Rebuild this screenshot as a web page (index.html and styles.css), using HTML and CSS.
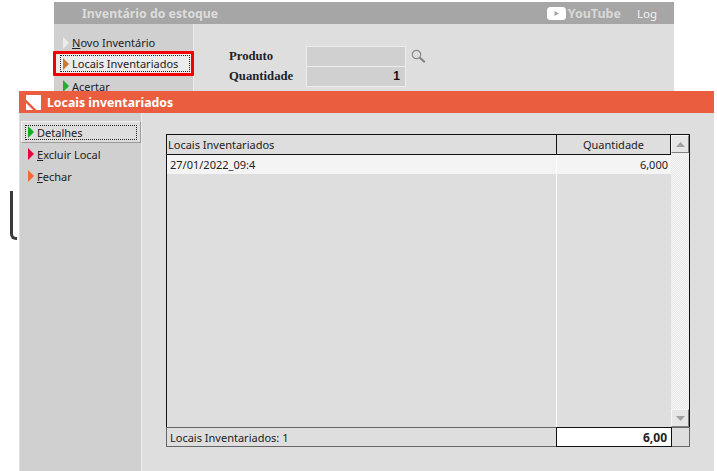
FILE: index.html
```html
<!DOCTYPE html>
<html lang="pt">
<head>
<meta charset="utf-8">
<title>Locais inventariados</title>
<link rel="stylesheet" href="styles.css">
</head>
<body>
<div class="curve"></div>
<section class="back">
  <header class="back-title">
    <span class="back-name">Inventário do estoque</span>
    <span class="yt">
      <svg class="yt-logo" width="19" height="13" viewBox="0 0 19 13"><rect width="19" height="13" rx="3.5" fill="#fff"/><path d="M7.500 4v5l4.500-2.500z" fill="#a6a6a6"/></svg>
      <span class="yt-word">YouTube</span>
    </span>
    <span class="log">Log</span>
  </header>
  <div class="back-body">
    <nav class="back-nav">
      <div class="item item-first"><i class="tri tri-white"></i><span><u>N</u>ovo Inventário</span></div>
      <div class="item item-active"><div class="focus"><i class="tri tri-orange"></i><span>Locais Inventariados</span></div></div>
      <div class="item item-last"><i class="tri tri-green"></i><span>Acertar</span></div>
    </nav>
    <div class="form">
      <div class="form-row">
        <label class="form-label">Produto</label>
        <div class="field"></div>
        <svg class="lens" width="15" height="15" viewBox="0 0 15 15"><circle cx="5.500" cy="5.500" r="4.200" fill="none" stroke="#8a8a8a" stroke-width="1.200"/><path d="M8.800 8.800l5 4.500" stroke="#808080" stroke-width="2"/></svg>
      </div>
      <div class="form-row">
        <label class="form-label">Quantidade</label>
        <div class="field field-num">1</div>
      </div>
    </div>
  </div>
</section>
<section class="win">
  <header class="win-title">
    <svg class="win-logo" width="15" height="15" viewBox="0 0 15 15"><path d="M0 0h15v15h-4.500L0 4.500z" fill="#fff"/><path d="M0 8l7 7H0z" fill="#fff"/></svg>
    <span>Locais inventariados</span>
  </header>
  <div class="win-body">
    <nav class="win-nav">
      <div class="act act-current"><div class="act-focus"><i class="tri tri-green2"></i><span>Detalhes</span></div></div>
      <div class="act"><i class="tri tri-red"></i><span><u>E</u>xcluir Local</span></div>
      <div class="act"><i class="tri tri-orange2"></i><span><u>F</u>echar</span></div>
    </nav>
    <main class="content">
      <div class="grid">
        <div class="grid-main">
          <div class="cols">
            <div class="head-row">
              <div class="head head-a">Locais Inventariados</div>
              <div class="head head-b">Quantidade</div>
            </div>
            <div class="rows">
              <div class="row">
                <div class="cell cell-a">27/01/2022_09:4</div>
                <div class="cell cell-b">6,000</div>
              </div>
              <div class="rows-rest"><div class="rest-a"></div><div class="rest-b"></div></div>
            </div>
          </div>
          <div class="scroll">
            <div class="sbtn"><svg width="9" height="5" viewBox="0 0 9 5"><path d="M4.500 0L9 5H0z" fill="#a0a0a0"/></svg></div>
            <div class="strack"></div>
            <div class="sbtn"><svg width="9" height="5" viewBox="0 0 9 5"><path d="M0 0h9L4.500 5z" fill="#a0a0a0"/></svg></div>
          </div>
        </div>
        <div class="foot">
          <div class="foot-a">Locais Inventariados: 1</div>
          <div class="foot-b">6,00</div>
          <div class="foot-c"></div>
        </div>
      </div>
    </main>
  </div>
</section>
</body>
</html>
```
FILE: styles.css
```css
html, body { margin: 0; padding: 0; }
body {
  width: 717px;
  height: 471px;
  overflow: hidden;
  position: relative;
  background: #fff;
  font-family: "Noto Sans", "DejaVu Sans", sans-serif;
  font-size: 11px;
  color: #222;
  white-space: nowrap;
}
.tri {
  display: block;
  width: 0;
  height: 0;
  border-style: solid;
  border-width: 6.500px 0 6.500px 6px;
  border-color: transparent;
  flex: none;
}
.tri-white { border-left-color: #ececec; }
.tri-orange { border-left-color: #d07a30; }
.tri-green { border-left-color: #1fae2e; }
.tri-green2 { border-left-color: #0fb01a; }
.tri-red { border-left-color: #e5003f; }
.tri-orange2 { border-left-color: #f4693a; }

.curve {
  position: absolute;
  left: 10px;
  top: 191px;
  width: 7px;
  height: 49px;
  box-sizing: border-box;
  border-left: 3px solid #3a3a3a;
  border-bottom: 3px solid #3a3a3a;
  border-bottom-left-radius: 6px;
}

.back {
  position: absolute;
  left: 54px;
  top: 2px;
  width: 620px;
  height: 110px;
  background: #dedede;
}
.back-title {
  height: 22px;
  background: #a6a6a6;
  display: flex;
  align-items: center;
  padding: 0 17px 0 28px;
  color: #dcdcdc;
}
.back-name { font-weight: 700; font-size: 12.300px; flex: 1; }
.yt { display: flex; align-items: center; gap: 2px; margin-right: 16px; }
.yt-logo { display: block; }
.yt-word { font-weight: 700; font-size: 12.500px; color: #d8d8d8; }
.log { color: #f2f2f2; font-size: 11.500px; }
.back-body { display: flex; height: 88px; }
.back-nav {
  width: 139px;
  background: #d0d0d0;
  border-right: 1px solid #ececec;
  padding-top: 9px;
}
.item {
  height: 22px;
  display: flex;
  align-items: center;
  gap: 3px;
  padding-left: 9px;
}
.item-first { height: 18px; padding-top: 1px; box-sizing: border-box; }
.item-last { height: 20px; }
.item-active {
  height: 25px;
  box-sizing: border-box;
  margin-left: -1px;
  width: 141px;
  border: 3px solid #f00000;
  border-radius: 1px;
  background: #ececec;
  padding: 0 0 0 4px;
}
.focus {
  flex: 1;
  height: 15px;
  margin-right: 1px;
  border: 1px dotted #222;
  display: flex;
  align-items: center;
  gap: 3px;
  padding-left: 2px;
}
.form { padding: 22px 0 0 35px; }
.form-row { display: flex; align-items: center; height: 20px; }
.form-label {
  width: 77px;
  padding-top: 1px;
  font-family: "Liberation Serif", serif;
  font-weight: 700;
  font-size: 12.700px;
  color: #1f1f2a;
}
.field {
  width: 98px;
  height: 19px;
  background: #d0d0d0;
  border: 1px solid #ececec;
  margin-bottom: -1px;
}
.field-num {
  text-align: right;
  padding-right: 5px;
  width: 93px;
  line-height: 18px;
  font-family: "Liberation Sans", sans-serif;
  font-weight: 700;
  font-size: 12px;
  color: #111;
}
.lens { margin-left: 5px; display: block; }

.win {
  position: absolute;
  left: 19px;
  top: 91px;
  width: 695px;
  height: 380px;
  background: #dedede;
  display: flex;
  flex-direction: column;
}
.win-title {
  height: 22px;
  background: #ea5e3f;
  display: flex;
  align-items: center;
  gap: 6px;
  padding-left: 7px;
  color: #fff;
  font-weight: 700;
  font-size: 12.300px;
}
.win-logo { display: block; }
.win-body { flex: 1; display: flex; }
.win-nav {
  width: 121px;
  margin-left: 1px;
  background: #d0d0d0;
  border-right: 1px solid #ececec;
  padding-top: 8px;
}
.act {
  height: 22px;
  display: flex;
  align-items: center;
  gap: 3px;
  padding-left: 8px;
}
.act-current {
  height: 22px;
  box-sizing: border-box;
  margin-left: 1px;
  padding: 0 3px;
  width: 120px;
  background: #dedede;
  border: 1px solid #f2f2f2;
  border-right-color: #9a9a9a;
  border-bottom-color: #9a9a9a;
}
.act-focus {
  flex: 1;
  height: 13px;
  border: 1px dotted #222;
  display: flex;
  align-items: center;
  gap: 3px;
  padding-left: 2px;
}
.content { flex: 1; padding: 21px 0 0 24px; }
.grid { width: 524px; }
.grid-main {
  height: 293px;
  display: flex;
  border: 1px solid #111;
  border-bottom: none;
  box-sizing: border-box;
}
.cols { flex: 1; display: flex; flex-direction: column; }
.head-row { display: flex; height: 20px; box-sizing: border-box; border-bottom: 1px solid #111; border-right: 1px solid #111; }
.head { line-height: 19px; }
.head-a { width: 390px; border-right: 1px solid #111; padding-left: 1px; box-sizing: border-box; }
.head-b { flex: 1; text-align: center; }
.rows { flex: 1; display: flex; flex-direction: column; }
.row { display: flex; height: 19px; background: #f4f4f4; line-height: 19px; }
.cell-a { width: 390px; padding-left: 3px; box-sizing: border-box; border-right: 1px solid #fff; }
.cell-b { flex: 1; text-align: right; padding-right: 3px; }
.rows-rest { flex: 1; display: flex; }
.rest-a { width: 390px; box-sizing: border-box; border-right: 1px solid #fff; }
.rest-b { flex: 1; }
.scroll { width: 18px; display: flex; flex-direction: column; }
.sbtn {
  height: 18px;
  box-sizing: border-box;
  background: #e6e6e6;
  border: 1px solid #f6f6f6;
  border-right-color: #808080;
  border-bottom-color: #808080;
  display: flex;
  align-items: center;
  justify-content: center;
}
.strack {
  flex: 1;
  background-color: #f0f0f0;
  background-image: repeating-conic-gradient(#e8e8e8 0 25%, #f6f6f6 0 50%);
  background-size: 2px 2px;
}
.foot {
  height: 20px;
  display: flex;
  box-sizing: border-box;
  border: 1px solid #666;
  border-top: none;
  line-height: 19px;
}
.foot-a { width: 389px; padding-left: 3px; box-sizing: border-box; border-top: 1px solid #666; }
.foot-b {
  width: 116px;
  box-sizing: border-box;
  background: #fff;
  border: 1px solid #111;
  text-align: right;
  padding-right: 4px;
  font-weight: 700;
  font-size: 12px;
  margin-bottom: -1px;
}
.foot-c { flex: 1; border-top: 1px solid #666; }
```
